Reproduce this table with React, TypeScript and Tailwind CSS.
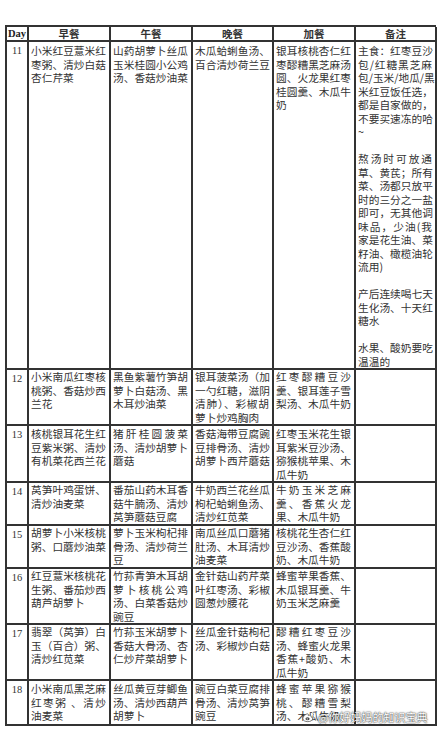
import React from "react";

type Cell = string[][]; // paragraphs -> lines

const header = ["早餐", "午餐", "晚餐", "加餐", "备注"];

const PT: Record<string, string> = {
  p0: "pt-0",
  p1: "pt-[1px]",
  p2: "pt-[2px]",
};

const rows: { day: string; h: number; pt: string; cells: Cell[] }[] = [
  {
    day: "11",
    h: 328,
    pt: "p2",
    cells: [
      [["小米红豆薏米红", "枣粥、清炒白菇", "杏仁芹菜"]],
      [["山药胡萝卜丝瓜", "玉米桂圆小公鸡", "汤、香菇炒油菜"]],
      [["木瓜蛤蜊鱼汤、", "百合清炒荷兰豆"]],
      [["银耳核桃杏仁红", "枣醪糟黑芝麻汤", "圆、火龙果红枣", "桂圆羹、木瓜牛", "奶"]],
      [
        ["主食：红枣豆沙", "包/红糖黑芝麻", "包/玉米/地瓜/黑", "米红豆饭任选，", "都是自家做的，", "不要买速冻的哈", "~"],
        [""],
        ["熬汤时可放通", "草、黄芪；所有", "菜、汤都只放平", "时的三分之一盐", "即可，无其他调", "味品，少油(我", "家是花生油、菜", "籽油、橄榄油轮", "流用)"],
        [""],
        ["产后连续喝七天", "生化汤、十天红", "糖水"],
        [""],
        ["水果、酸奶要吃", "温温的"],
      ],
    ],
  },
  {
    day: "12",
    h: 56,
    pt: "p0",
    cells: [
      [["小米南瓜红枣核", "桃粥、香菇炒西", "兰花"]],
      [["黑鱼紫薯竹笋胡", "萝卜白菇汤、黑", "木耳炒油菜"]],
      [["银耳菠菜汤（加", "一勺红糖，滋阴", "清肺）、彩椒胡", "萝卜炒鸡胸肉"]],
      [["红枣醪糟豆沙", "羹、银耳莲子雪", "梨汤、木瓜牛奶"]],
      [[]],
    ],
  },
  {
    day: "13",
    h: 57,
    pt: "p1",
    cells: [
      [["核桃银耳花生红", "豆紫米粥、清炒", "有机菜花西兰花"]],
      [["猪肝桂圆菠菜", "汤、清炒胡萝卜", "蘑菇"]],
      [["香菇海带豆腐豌", "豆排骨汤、清炒", "胡萝卜西芹蘑菇"]],
      [["红枣玉米花生银", "耳紫米豆沙汤、", "猕猴桃苹果、木", "瓜牛奶"]],
      [[]],
    ],
  },
  {
    day: "14",
    h: 43,
    pt: "p0",
    cells: [
      [["莴笋叶鸡蛋饼、", "清炒油麦菜"]],
      [["番茄山药木耳香", "菇牛腩汤、清炒", "莴笋蘑菇豆腐"]],
      [["牛奶西兰花丝瓜", "枸杞蛤蜊鱼汤、", "清炒红苋菜"]],
      [["牛奶玉米芝麻", "羹、香蕉火龙", "果、木瓜牛奶"]],
      [[]],
    ],
  },
  {
    day: "15",
    h: 43,
    pt: "p0",
    cells: [
      [["胡萝卜小米核桃", "粥、口蘑炒油菜"]],
      [["萝卜玉米枸杞排", "骨汤、清炒荷兰", "豆"]],
      [["南瓜丝瓜口蘑猪", "肚汤、木耳清炒", "油麦菜"]],
      [["核桃花生杏仁红", "豆沙汤、香蕉酸", "奶、木瓜牛奶"]],
      [[]],
    ],
  },
  {
    day: "16",
    h: 56,
    pt: "p0",
    cells: [
      [["红豆薏米核桃花", "生粥、番茄炒西", "葫芦胡萝卜"]],
      [["竹荪青笋木耳胡", "萝卜核桃公鸡", "汤、白菜香菇炒", "豌豆"]],
      [["金针菇山药芹菜", "叶红枣汤、彩椒", "圆葱炒腰花"]],
      [["蜂蜜苹果香蕉、", "木瓜银耳羹、牛", "奶玉米芝麻羹"]],
      [[]],
    ],
  },
  {
    day: "17",
    h: 56,
    pt: "p0",
    cells: [
      [["翡翠（莴笋）白", "玉（百合）粥、", "清炒红苋菜"]],
      [["竹荪玉米胡萝卜", "香菇大骨汤、杏", "仁炒芹菜胡萝卜"]],
      [["丝瓜金针菇枸杞", "汤、彩椒炒白菇"]],
      [["醪糟红枣豆沙", "汤、蜂蜜火龙果", "香蕉+酸奶、木", "瓜牛奶"]],
      [[]],
    ],
  },
  {
    day: "18",
    h: 45,
    pt: "p1",
    cells: [
      [["小米南瓜黑芝麻", "红枣粥 、清炒", "油麦菜"]],
      [["丝瓜黄豆芽鲫鱼", "汤、清炒西葫芦", "胡萝卜"]],
      [["豌豆白菜豆腐排", "骨汤、清炒莴笋", "豌豆"]],
      [["蜂蜜苹果猕猴", "桃、醪糟雪梨", "汤、木瓜牛奶"]],
      [[]],
    ],
  },
];

const colW = ["w-[82px]", "w-[82px]", "w-[81px]", "w-[82px]", "w-[81px]"];

function CellContent({ cell, pt }: { cell: Cell; pt: string }) {
  return (
    <div className={"pl-[2px] pr-[3px] " + PT[pt]}>
      {cell.map((para, pi) =>
        para.map((line, li) => {
          const justify = li < para.length - 1;
          return (
            <div
              key={pi + "-" + li}
              className={
                "h-[13.5px] leading-[13.5px] whitespace-nowrap overflow-visible " +
                (justify ? "text-justify [text-align-last:justify]" : "")
              }
            >
              {line === "" ? "\u00a0" : line}
            </div>
          );
        })
      )}
    </div>
  );
}

function WeiboLogo() {
  return (
    <svg width="14" height="12" viewBox="0 0 24 20" className="shrink-0">
      <path
        d="M10 18c-4.5 0-8.5-2-8.5-5.2 0-1.7 1-3.6 2.8-5.4 2.4-2.4 5.2-3.5 6.3-2.4.5.5.5 1.3.2 2.3-.2.5.4.2.4.2 1.9-.8 3.6-.8 4.2.1.3.5.3 1.1 0 1.9-.1.4 0 .4.3.5 1.2.4 2.6 1.3 2.6 2.9 0 2.6-3.8 5.1-8.3 5.1z"
        fill="#fff"
        stroke="#444"
        strokeWidth="1.2"
      />
      <ellipse cx="9.5" cy="13" rx="3.5" ry="2.6" fill="#444" />
      <circle cx="9" cy="13.3" r="1" fill="#fff" />
      <path d="M17 2.5a5 5 0 0 1 5 6" stroke="#fff" strokeWidth="1.6" fill="none" />
      <path d="M16.5 5.5a2 2 0 0 1 2.5 2.5" stroke="#fff" strokeWidth="1.4" fill="none" />
    </svg>
  );
}

export default function App() {
  return (
    <div className="relative w-[437px] h-[731px] bg-white overflow-hidden text-[#333] font-['Noto_Sans_CJK_SC',sans-serif] text-[10.7px]">
      <div className="pt-[25px] pl-[5px]">
        <div className="w-[431px] border-l-2 border-t-2 border-[#333]">
          {/* header */}
          <div className="flex h-[15px]">
            <div className="w-[22px] shrink-0 border-r-2 border-b-2 border-[#333] flex items-center justify-center font-['Liberation_Serif',serif] font-bold text-[10.5px] text-[#222]">
              Day
            </div>
            {header.map((h, i) => (
              <div
                key={h}
                className={
                  colW[i] +
                  " shrink-0 border-r-2 border-b-2 border-[#333] flex items-center justify-center font-bold text-[10.5px] text-[#333]"
                }
              >
                {h}
              </div>
            ))}
          </div>
          {rows.map((r) => (
            <div key={r.day} className="flex" style={{ height: r.h }}>
              <div className="w-[22px] shrink-0 border-r-2 border-b-2 border-[#333] text-center pt-[3px] font-['Liberation_Serif',serif] text-[10.5px] leading-[12px] text-[#333]">
                {r.day}
              </div>
              {r.cells.map((c, i) => (
                <div
                  key={i}
                  className={colW[i] + " shrink-0 border-r-2 border-b-2 border-[#333] overflow-visible"}
                >
                  <CellContent cell={c} pt={r.pt} />
                </div>
              ))}
            </div>
          ))}
        </div>
      </div>
      {/* watermark */}
      <div className="absolute left-[302px] top-[710px] flex items-center gap-[2px] text-white text-[11px] leading-[14px] font-['Noto_Sans_CJK_SC',sans-serif] [text-shadow:0_0_2px_#333,0_0_1px_#333]">
        <WeiboLogo />
        <span>@你好妈妈的知识宝典</span>
      </div>
    </div>
  );
}
